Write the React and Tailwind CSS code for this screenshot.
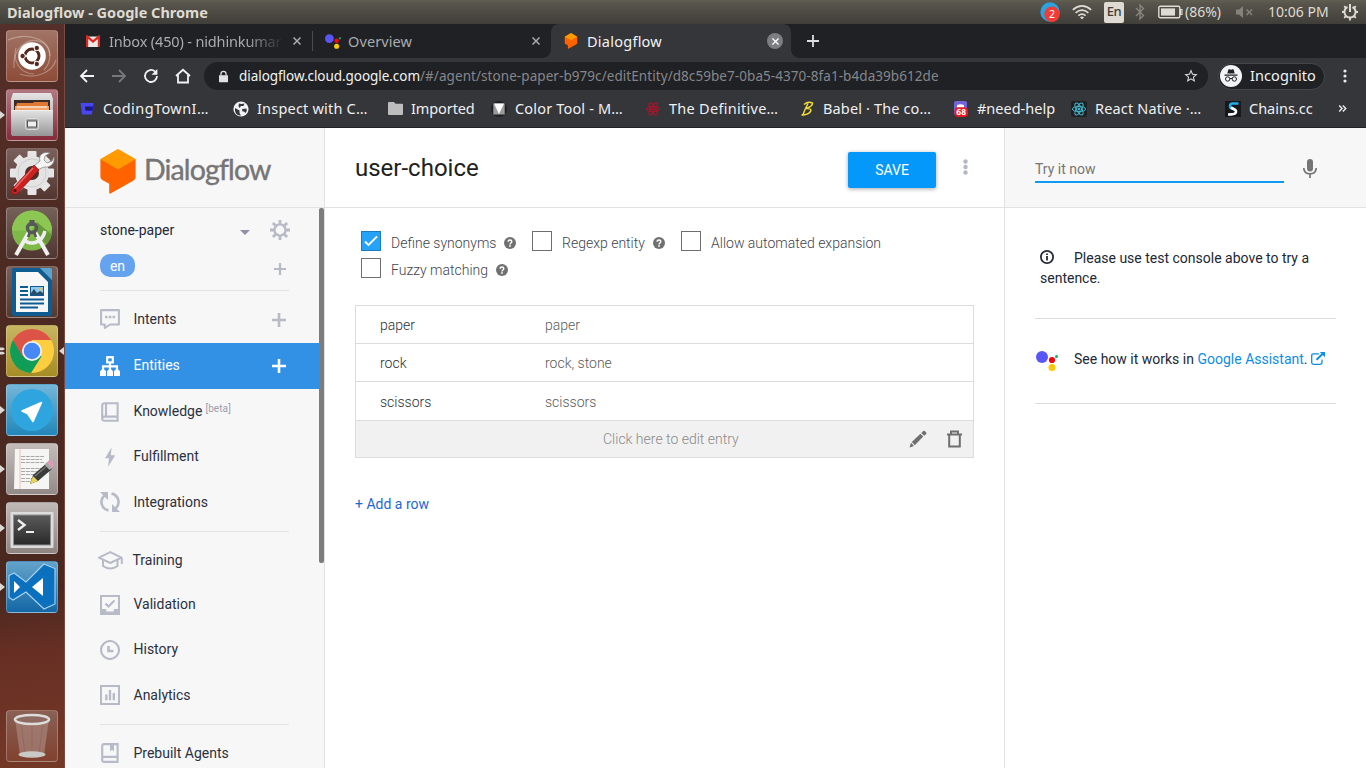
import React from "react";

/* ---------- Desktop launcher ---------- */

function Tile({ className, arrow, focused, children }) {
  return (
    <div className="relative flex w-full shrink-0 justify-center">
      <div className={"h-[52px] w-[52px] overflow-hidden rounded-[4px] border border-white/25 " + className}>
        <svg viewBox="1 1 50 50" className="block h-[50px] w-[50px]">{children}</svg>
      </div>
      {arrow && (
        <svg viewBox="0 0 5 8" className="absolute top-[22px] left-0 h-2 w-[5px]"><path d="M0 0L5 4L0 8Z" fill="#dcd8d4" /></svg>
      )}
      {focused && (
        <>
          <svg viewBox="0 0 5 8" className="absolute top-[22px] left-0 h-2 w-[5px]"><path d="M0 0.5H3L5 2L3 3.2H0ZM0 4.8H3L5 6.2L3 7.5H0Z" fill="#dcd8d4" /></svg>
          <svg viewBox="0 0 5 8" className="absolute top-[22px] right-0 h-2 w-[5px]"><path d="M5 0L0 4L5 8Z" fill="#dcd8d4" /></svg>
        </>
      )}
    </div>
  );
}

function Launcher() {
  return (
    <div className="flex w-[65px] shrink-0 flex-col items-center gap-[7px] border-r border-[#7b4a3f] bg-[linear-gradient(172deg,#55302a_0%,#4d2a22_30%,#4a2820_76%,#672f24_84%,#743826_100%)] pt-[6px]">
      <Tile className="bg-[linear-gradient(#a07466,#8e4c38)]">
        <g fill="none" stroke="#fff" strokeOpacity=".3" strokeWidth="1.2">
          <path d="M8 38C6 18 22 6 36 12C46 18 46 32 38 40" /><path d="M2 10C20 2 44 8 44 26" /><path d="M14 44C30 50 46 42 50 30" /><path d="M10 18C6 30 14 44 28 44" />
        </g>
        <circle cx="26" cy="26" r="13.8" fill="#fff" />
        <circle cx="26" cy="26" r="7" fill="none" stroke="#55291d" strokeWidth="3" />
        <g stroke="#fff" strokeWidth="1.4"><path d="M26 26L15 26M26 26L32 15.5M26 26L32 36.5" /></g>
        <circle cx="26" cy="26" r="5.2" fill="#fff" />
        <g fill="#55291d" stroke="#fff" strokeWidth="1"><circle cx="16.6" cy="26" r="2.7" /><circle cx="30.8" cy="18" r="2.7" /><circle cx="30.8" cy="34" r="2.7" /></g>
      </Tile>
      <Tile className="bg-[linear-gradient(#b17880,#862b3b)]" arrow>
        <defs><linearGradient id="cab" x2="0" y2="1"><stop stopColor="#e4e4e4" /><stop offset="1" stopColor="#969696" /></linearGradient></defs>
        <path d="M7 4H45L47 10V46H5V10Z" fill="url(#cab)" />
        <rect x="8" y="11" width="36" height="10" fill="#3b2d26" />
        <path d="M11 14H27L28 13H42V21H9Z" fill="#e07a33" /><path d="M9 17H43V21H9Z" fill="#f2a46b" /><path d="M11 18H41" stroke="#fff" strokeWidth="1" />
        <path d="M5 21H47V47H6Z" fill="url(#cab)" /><path d="M6 21.5H46" stroke="#eee" />
        <rect x="19.5" y="29.5" width="13" height="11" rx="2" fill="#a8a8a8" stroke="#ddd" /><rect x="21.5" y="32" width="9" height="6" fill="#eee" stroke="#555" />
      </Tile>
      <Tile className="bg-[linear-gradient(#7a605b,#543630)]">
        <g transform="translate(26 25)">
          <g fill="#e6e6e6">{[0, 45, 90, 135].map((a) => <rect key={a} x="-4.5" y="-22" width="9" height="44" rx="1" transform={"rotate(" + a + ")"} />)}</g>
          <circle r="17" fill="#e3e3e3" /><circle r="14" fill="none" stroke="#cfcfcf" /><circle r="7" fill="#4c302b" />
        </g>
        <path d="M44 5L39 8L38 12L41 15L46 13L48 9C49 15 45 20 38 19L31 22L28 18L34 13C32 7 37 3 44 5Z" fill="#f5f5f5" stroke="#8b8b8b" strokeWidth=".8" />
        <path d="M28 17L33 22L12 45C8 49 3 44 7 40Z" fill="#cd2121" stroke="#7d1212" strokeWidth=".7" /><path d="M27 20L9 40" stroke="#ee6a62" strokeWidth="1.5" /><circle cx="9" cy="42.5" r="1.6" fill="#4a1515" />
      </Tile>
      <Tile className="bg-[linear-gradient(#75615a,#503630)]">
        <circle cx="26" cy="23.5" r="20" fill="#7fb947" /><path d="M6 23.5A20 20 0 0 1 46 23.5Z" fill="#8cc653" />
        <path d="M31 15L46 28L41 37L34 34L26 24Z" fill="#67993b" />
        <path d="M18 32C23 39 36 37 39 24" fill="none" stroke="#eee" strokeWidth="3.5" />
        <path d="M23 25L10 48M29 25L42 48" stroke="#f0f0f0" strokeWidth="4" />
        <rect x="23.5" y="13" width="5" height="6" fill="#555" /><circle cx="26" cy="21" r="4.5" fill="none" stroke="#56585a" strokeWidth="3.4" /><path d="M24 25L22 30M28 25L30 30" stroke="#555" strokeWidth="2.5" />
      </Tile>
      <Tile className="bg-[linear-gradient(#77605a,#55382f)]">
        <path d="M8 2H34L46 14V48Q46 50 44 50H8Q6 50 6 48V4Q6 2 8 2Z" fill="#0e5c92" /><path d="M34 2H44Q46 2 46 4V14Z" fill="#5aa3cf" />
        <path d="M10 6H32L42 16V46H10Z" fill="#f7f7f7" />
        <g stroke="#0e5c92" strokeWidth="2"><path d="M14 21H22M14 25H22M14 29H22M14 33.5H38M14 37.5H38M14 41.5H32" /></g>
        <rect x="24.5" y="20.5" width="13" height="9" fill="#91c8ee" stroke="#0e5c92" /><path d="M25 29V27L28 23L31 27L34 25L37 27V29Z" fill="#274d68" /><circle cx="35" cy="23" r="1.3" fill="#f6c445" />
      </Tile>
      <Tile className="bg-[linear-gradient(#c7b561,#a68c24)]" focused>
        <g transform="translate(26 26)">
          <circle r="22" fill="#ffcd40" />
          <path d="M0 0L-19.05 -11A22 22 0 0 0 -1 22L9.5 5.5Z" fill="#109d58" />
          <path d="M0 -11H19.05A22 22 0 0 0 -19.05 -11L-9.5 5.5Z" fill="#dc5347" />
          <circle r="10" fill="#f4f4f4" /><circle r="8.3" fill="#4688f4" />
        </g>
      </Tile>
      <Tile className="bg-[linear-gradient(#74b6d8,#2287b9)]" arrow>
        <circle cx="26" cy="26" r="21" fill="#2fa5e0" /><path d="M35.5 18.5L16 27L21.5 29.5L27 37.5Z" fill="#fff" stroke="#fff" strokeWidth="1.6" strokeLinejoin="round" />
      </Tile>
      <Tile className="bg-[linear-gradient(#c3bcbb,#938b8a)]" arrow>
        <path d="M9 6H43V46H8Z" fill="#f5f5f3" /><path d="M14 6V46" stroke="#edb1ac" strokeWidth=".8" />
        <g stroke="#a9a9a9" strokeWidth="1"><path d="M15 13.5H38M15 16.5H36M15 19.5H38M15 25.5H37M15 28.5H34M15 31.5H32M15 35.5H28M15 38.5H25" strokeDasharray="4 .8" /></g>
        <path d="M24 41L27 32L41 20L46 26L32 38Z" fill="#3b3b3b" /><path d="M24 41L27 33L32 38Z" fill="#e8d455" /><path d="M29 33L42 22" stroke="#777" strokeWidth="1.3" /><path d="M39 21L43 17.5Q47 17 48 22L45 26Z" fill="#dd9bb5" /><path d="M38.5 21.5L41 19.5L46 25L43.5 27Z" fill="#a9a9a9" />
      </Tile>
      <Tile className="bg-[linear-gradient(#c0b8b7,#8e8583)]" arrow>
        <defs><linearGradient id="screen" x2="0" y2="1"><stop stopColor="#5a5a5a" /><stop offset="1" stopColor="#2a2a2a" /></linearGradient></defs>
        <rect x="4.5" y="10" width="43" height="36" rx="1" fill="#dcdcdc" /><rect x="7" y="12.5" width="38" height="31" fill="#8f8f8f" /><rect x="8" y="13.5" width="36" height="29" fill="url(#screen)" />
        <path d="M12 18L18.5 23L12 28" fill="none" stroke="#eee" strokeWidth="2.4" /><path d="M20 30H28" stroke="#eee" strokeWidth="2.2" />
      </Tile>
      <Tile className="bg-[linear-gradient(#63a3cb,#1467a5)]" arrow>
        <path d="M38 3L49 7.5V43L38 48L20 31L7 39L3 36.5V14.5L8 12L20 21Z" fill="#0b70bd" stroke="#a9d4f1" strokeWidth="1.1" />
        <path d="M37 17V35L26 26Z" fill="#fff" /><path d="M8 20L14 26L8 32Z" fill="#fff" />
      </Tile>
      <div className="mt-auto mb-[6px]">
        <Tile className="bg-[linear-gradient(#8a6055,#81412f)]">
          <path d="M9 9H43L38 45Q26 49 14 45Z" fill="#a68278" fillOpacity=".75" />
          <path d="M15 14L19 43M26 14V45M37 14L33 43" stroke="#93695e" strokeWidth="1" />
          <ellipse cx="26" cy="44.5" rx="13.5" ry="3.3" fill="#c9c9c5" />
          <ellipse cx="26" cy="9.5" rx="17" ry="4.5" fill="#8d6b63" stroke="#dcdcd8" strokeWidth="2.6" />
        </Tile>
      </div>
    </div>
  );
}

/* ---------- System menu bar ---------- */

function SystemBar() {
  return (
    <div className="flex h-6 w-full shrink-0 items-center bg-[linear-gradient(#605e51_0%,#55534a_20%,#403e39_100%)] pl-[7px] font-['Noto_Sans',sans-serif] text-[#dfdbd2]">
      <span className="text-[14.5px] leading-6 font-bold whitespace-pre">Dialogflow - Google Chrome</span>
      <div className="ml-auto flex h-full items-center">
        <svg viewBox="0 0 20 20" className="h-5 w-5"><circle cx="10" cy="10" r="9.7" fill="#2ba3df" /><circle cx="12" cy="12.3" r="7.7" fill="#f23b36" /><text x="12" y="16" fontSize="10.5" fill="#fff" textAnchor="middle" fontFamily="Noto Sans">2</text></svg>
        <svg viewBox="0 0 20 16" className="ml-3 h-4 w-5" fill="none" stroke="#dfdbd2" strokeWidth="1.7"><path d="M.8 5.8Q10-2 19.2 5.8M3.6 8.8Q10 3.4 16.4 8.8M6.4 11.6Q10 8.6 13.6 11.6" /><path d="M8 13.2Q10 11.8 12 13.2L10 15.5Z" fill="#dfdbd2" stroke="none" /></svg>
        <span className="ml-3 flex h-[21px] w-5 items-center justify-center rounded-[2px] bg-[#dfdbd2] text-[13px] font-medium tracking-[-0.5px] text-[#3f3d38]">En</span>
        <svg viewBox="0 0 10 18" className="ml-[11px] h-[18px] w-[10px]" fill="none" stroke="#8a877f" strokeWidth="1.3"><path d="M1 5L8.5 12.5L5 16V2L8.5 5.5L1 13" /></svg>
        <svg viewBox="0 0 25 14" className="ml-[13px] h-[14px] w-[25px]"><rect x=".8" y="1.3" width="21" height="11.4" rx="1.5" fill="none" stroke="#dfdbd2" strokeWidth="1.4" /><rect x="3" y="3.4" width="14" height="7.2" fill="#dfdbd2" /><path d="M22.5 4.5H24V9.5H22.5Z" fill="none" stroke="#dfdbd2" strokeWidth="1.1" /></svg>
        <span className="ml-[2px] w-[38px] text-[14px] leading-6 whitespace-nowrap">(86%)</span>
        <svg viewBox="0 0 18 14" className="ml-[13px] h-[14px] w-[18px]"><path d="M0 4.5H3L7 1V13L3 9.5H0Z" fill="#85827a" /><path d="M10.5 4.5L16 10M16 4.5L10.5 10" stroke="#85827a" strokeWidth="1.6" /></svg>
        <span className="ml-[14px] w-[61px] text-[14px] leading-6 whitespace-nowrap">10:06 PM</span>
        <svg viewBox="0 0 18 18" className="mr-[7px] ml-[12px] h-[18px] w-[18px]" fill="none" stroke="#dfdbd2"><path d="M6.5 4A5.6 5.6 0 1 0 11.5 4" strokeWidth="2" /><path d="M9 1V9" strokeWidth="2" /><path d="M9 15V17.5M1 9H3.5M14.5 9H17M3.2 3.2L5 5M14.8 3.2L13 5M3.2 14.8L5 13M14.8 14.8L13 13" strokeWidth="1.8" /></svg>
      </div>
    </div>
  );
}

/* ---------- Browser chrome ---------- */

function AssistantMark({ className }) {
  return (
    <svg viewBox="0 0 22 20" className={className}>
      <circle cx="6" cy="6" r="6" fill="#5a56f6" /><circle cx="16" cy="9" r="3.1" fill="#f3060e" /><circle cx="16" cy="16.5" r="3.5" fill="#fdc807" /><circle cx="20.5" cy="5.6" r="1.5" fill="#13b858" />
    </svg>
  );
}

function DialogflowMark({ className }) {
  return (
    <svg viewBox="0 0 36 45" className={className}>
      <path d="M18 0.4L35.6 10.3V28Q35.6 30.3 33.6 31.4L10.6 44.6Q9.2 45.2 9.2 43.6V34.8L2.3 31Q.4 29.8 .4 27.8V10.3Z" fill="#ff6300" />
      <path d="M16.5 .7Q18 -.2 19.5 .7L35.6 10.3L18 20.4L.4 10.3Z" fill="#ff9a00" />
    </svg>
  );
}

function Cross({ className }) {
  return <svg viewBox="0 0 8 8" className={className} stroke="currentColor" strokeWidth="1.5"><path d="M.5 .5L7.5 7.5M7.5 .5L.5 7.5" /></svg>;
}

function TabStrip() {
  return (
    <div className="flex h-[34px] bg-[#202124] text-[14.5px] leading-[34px] text-[#a9acb1]">
      <div className="flex w-[247px] items-center pl-[21px]">
        <svg viewBox="0 0 14 12" className="h-3 w-[14px]"><path d="M0 1.5V12H14V1.5Z" fill="#e9e9e9" /><path d="M0 12V1Q0 0 1 0L7 5L13 0Q14 0 14 1V12H11.8V4L7 8L2.2 4V12Z" fill="#dd2a20" /></svg>
        <span className="ml-[9px] w-[175px] overflow-hidden tracking-[-0.15px] whitespace-nowrap [mask-image:linear-gradient(90deg,#000_78%,transparent)]">Inbox (450) - nidhinkumar</span>
        <Cross className="ml-[9px] h-2 w-2" />
      </div>
      <div className="flex w-[239px] items-center">
        <div className="h-5 w-px bg-[#4a4c50]" />
        <AssistantMark className="ml-3 h-[15px] w-[16px]" />
        <span className="ml-[7px] tracking-[0.1px]">Overview</span>
        <Cross className="mr-[11px] ml-auto h-2 w-2" />
      </div>
      <div className="relative flex w-[240px] items-center rounded-t-lg bg-[#35363a] text-[#f1f3f4]">
        <span className="absolute bottom-0 -left-2 h-2 w-2 bg-[radial-gradient(circle_at_0_0,transparent_7.5px,#35363a_8px)]" />
        <span className="absolute -right-2 bottom-0 h-2 w-2 bg-[radial-gradient(circle_at_100%_0,transparent_7.5px,#35363a_8px)]" />
        <DialogflowMark className="ml-[13px] h-4 w-[14px]" />
        <span className="ml-[9px] tracking-[0.25px]">Dialogflow</span>
        <span className="mr-2 ml-auto flex h-4 w-4 items-center justify-center rounded-full bg-[#7d7e82] text-white"><Cross className="h-[7px] w-[7px]" /></span>
      </div>
      <svg viewBox="0 0 12 12" className="mt-[11px] ml-4 h-3 w-3" stroke="#dcdee0" strokeWidth="1.8"><path d="M6 0V12M0 6H12" /></svg>
    </div>
  );
}

function Toolbar() {
  return (
    <div className="flex h-9 items-center pl-[14px] text-[14.5px]">
      <svg viewBox="0 0 104 16" className="h-4 w-[112px]" fill="none" stroke="#f1f3f4" strokeWidth="1.8" preserveAspectRatio="xMinYMid meet">
        <path d="M15 8H2M8 2L2 8L8 14" /><path d="M33 8H46M40 2L46 8L40 14" stroke="#77787c" />
        <path d="M78 8A6 6 0 1 1 76 3.5" /><path d="M78.4 1V6.8H72.5Z" fill="#f1f3f4" stroke="none" />
        <path d="M97 8L104 1.8L111 8M99 7V14.5H109V7" />
      </svg>
      <div className="ml-[13px] flex h-7 w-[1004px] items-center rounded-full bg-[#202124] pl-[15px]">
        <svg viewBox="0 0 10 13" className="h-[13px] w-[9px]"><path d="M0 5H10V12Q10 13 9 13H1Q0 13 0 12Z" fill="#dfe1e4" /><path d="M2.2 5.5V3.5A2.8 2.8 0 0 1 7.8 3.5V5.5" fill="none" stroke="#dfe1e4" strokeWidth="1.4" /></svg>
        <span className="ml-[11px] text-[13.5px] tracking-[-0.05px] text-[#f1f3f4]">dialogflow.cloud.google.com</span>
        <span className="text-[13.5px] tracking-[0.065px] text-[#85878b]">/#/agent/stone-paper-b979c/editEntity/d8c59be7-0ba5-4370-8fa1-b4da39b612de</span>
        <svg viewBox="0 0 24 24" className="mr-[9px] ml-auto h-4 w-4" fill="#d6d8db"><path d="M22 9.24l-7.19-.62L12 2 9.19 8.63 2 9.24l5.46 4.73L5.82 21 12 17.27 18.18 21l-1.63-7.03L22 9.24zM12 15.4l-3.76 2.27 1-4.28-3.32-2.88 4.38-.38L12 6.1l1.71 4.04 4.38.38-3.32 2.88 1 4.28L12 15.4z" /></svg>
      </div>
      <div className="ml-[10px] flex h-[27px] w-[107px] items-center rounded-full border border-[#46474b] bg-[#202124] pl-px text-[#f1f3f4]">
        <svg viewBox="0 0 22 22" className="h-[22px] w-[22px]"><circle cx="11" cy="11" r="11" fill="#f1f3f4" /><path d="M7.3 8.5L8.4 4.6Q8.6 4 9.2 4.2L11 4.7L12.8 4.2Q13.4 4 13.6 4.6L14.7 8.5ZM4.5 9.6H17.5V10.7H4.5Z" fill="#202124" /><g fill="none" stroke="#202124"><circle cx="7.7" cy="14" r="2.2" /><circle cx="14.3" cy="14" r="2.2" /><path d="M9.9 13.6Q11 13 12.1 13.6" /></g></svg>
        <span className="ml-2 tracking-[0.08px]">Incognito</span>
      </div>
      <svg viewBox="0 0 4 14" className="ml-[18px] h-[14px] w-1" fill="#e8eaed"><circle cx="2" cy="2" r="1.6" /><circle cx="2" cy="7" r="1.6" /><circle cx="2" cy="12" r="1.6" /></svg>
    </div>
  );
}

function ReactAtom({ color, bg }) {
  return (
    <svg viewBox="0 0 16 16" className="h-4 w-4">
      {bg && <rect width="16" height="16" rx="2" fill={bg} />}
      <g fill="none" stroke={color} strokeWidth="1" transform="translate(8 8)"><ellipse rx="6.6" ry="2.6" /><ellipse rx="6.6" ry="2.6" transform="rotate(60)" /><ellipse rx="6.6" ry="2.6" transform="rotate(120)" /><circle r="1" fill={color} /></g>
    </svg>
  );
}

function Bookmark({ className, label, children }) {
  return (
    <div className={"flex shrink-0 items-center gap-2 " + className}>
      <span className="flex w-4 justify-center">{children}</span>
      <span className="whitespace-nowrap">{label}</span>
    </div>
  );
}

function Bookmarks() {
  return (
    <div className="flex h-[34px] items-center border-b border-[#202124] pb-1 pl-[14px] text-[14.5px] text-[#eff0f1]">
      <Bookmark className="w-[154px] tracking-[0.42px]" label="CodingTownI…"><svg viewBox="0 0 14 13" className="h-[13px] w-[14px]"><path d="M.5 1H13.5L11.8 12.5H2.2Z" fill="#4a47ef" /><path d="M5 4.5H13L12.3 8.8H5.7Z" fill="#1713b5" /><rect x="5.5" y="5" width="3.2" height="3" fill="#26272b" /></svg></Bookmark>
      <Bookmark className="w-[154px] tracking-[0.2px]" label="Inspect with C…"><svg viewBox="0 0 16 16" className="h-4 w-4"><circle cx="8" cy="8" r="7.6" fill="#f1f3f4" /><path d="M2 7L6.5 9.5V12L8 14.5Q3 14.5 2 10ZM6 2.5L8.5 3L11.5 2.5L10.5 5H8L6.5 7L5.5 5ZM9 8L13.5 7.5Q14.5 10 12.5 12L11 10.5H9.5Z" fill="#35363a" /></svg></Bookmark>
      <Bookmark className="w-[104px] tracking-[-0.1px]" label="Imported"><svg viewBox="0 0 15 13" className="h-[13px] w-[15px]"><path d="M1 0H6L7.5 1.8H14Q15 1.8 15 2.8V12Q15 13 14 13H1Q0 13 0 12V1Q0 0 1 0Z" fill="#bdbdbd" /></svg></Bookmark>
      <Bookmark className="w-[154px] tracking-[0.17px]" label="Color Tool - M…"><svg viewBox="0 0 16 16" className="h-4 w-4"><circle cx="8" cy="8" r="8" fill="#202124" /><rect x="2.3" y="2.5" width="11.4" height="11" fill="#9b9b9b" /><path d="M3 2.5H13L8 13Z" fill="#fff" /></svg></Bookmark>
      <Bookmark className="w-[154px] tracking-[0.28px]" label="The Definitive…"><ReactAtom color="#b3122b" /></Bookmark>
      <Bookmark className="w-[154px] tracking-[0.14px]" label="Babel · The co…"><svg viewBox="0 0 14 16" className="h-4 w-[14px]" fill="none" stroke="#f3dc3a" strokeWidth="1.5"><path d="M4 3.5Q8 0 12.5 2Q13 5 6 7.5Q12 7 10.5 10.5Q8 14 1.5 14M8 2.5Q5 8 2.5 15" /></svg></Bookmark>
      <Bookmark className="w-[118px]" label="#need-help"><svg viewBox="0 0 16 16" className="h-4 w-4"><rect x="1" width="13" height="14" rx="2" fill="#7064d8" /><path d="M4 4Q7.5 2.5 11 4V7H4Z" fill="#fff" /><rect x="1.5" y="6.2" width="13.5" height="9.8" rx="4" fill="#e41d25" /><text x="8.2" y="14.2" fontSize="8.5" fontWeight="700" fill="#fff" textAnchor="middle" fontFamily="Noto Sans">68</text></svg></Bookmark>
      <Bookmark className="w-[154px] tracking-[0.16px]" label="React Native ·…"><ReactAtom color="#43b9cf" bg="#202124" /></Bookmark>
      <Bookmark className="w-[109px]" label="Chains.cc"><svg viewBox="0 0 16 16" className="h-4 w-4"><rect width="16" height="16" fill="#17181b" /><path d="M13.5 2.5H7.5Q5 2.5 5 5T7.5 7.5" fill="none" stroke="#1caee8" strokeWidth="2.6" /><path d="M6 6.5L9.5 8.5Q12 10 10.5 12Q9.5 13.5 3 13.5" fill="none" stroke="#fff" strokeWidth="2.6" /></svg></Bookmark>
      <svg viewBox="0 0 9 8" className="ml-1 h-[7px] w-[9px]" fill="none" stroke="#eee" strokeWidth="1.6"><path d="M.7 .7L4 4L.7 7.3M4.9 .7L8.2 4L4.9 7.3" /></svg>
    </div>
  );
}

/* ---------- Dialogflow side navigation ---------- */

const ICONS = {
  intents: (
    <g><path d="M1.1 1.1H18.9V15.5H10L4.8 19V15.5H1.1Z" fill="none" stroke="currentColor" strokeWidth="2.1" strokeLinejoin="round" /><path d="M5 6.8H7.5V9.3H5ZM8.8 6.8H11.3V9.3H8.8ZM12.6 6.8H15.1V9.3H12.6Z" fill="currentColor" /></g>
  ),
  knowledge: <path d="M4.5 1.2H17.6V18.8H4.5Q2.2 18.8 2.2 16.8V3.2Q2.2 1.2 4.5 1.2ZM17.6 14.6H4.8Q2.4 14.6 2.4 16.5M6 1V14.5" fill="none" stroke="currentColor" strokeWidth="2.1" />,
  fulfillment: <path d="M11.6 .5L5 11.2H9L8.2 19.8L15.2 8.2H10.8Z" fill="currentColor" />,
  integrations: (
    <g>
      <path d="M8.5 18.4A8.5 8.5 0 0 1 4.2 3.8M11.5 1.6A8.5 8.5 0 0 1 15.8 16.2" fill="none" stroke="currentColor" strokeWidth="2.6" />
      <path d="M0 0H8V8ZM20 20H12V12Z" fill="currentColor" />
    </g>
  ),
  entities: (
    <g fill="none" stroke="currentColor" strokeWidth="2.2">
      <rect x="7.2" y="1.2" width="5.6" height="5.2" /><path d="M10 6.5V15M3 15V10.3H17V15" />
      <g fill="currentColor" stroke="none"><path d="M0 15.3L1.5 13.7H4.8L6 15.3V20H0ZM7 15.3L8.3 13.7H11.7L13 15.3V20H7ZM14 15.3L15.3 13.7H18.6L20 15.3V20H14Z" /></g>
    </g>
  ),
  validation: (
    <g><path d="M1 1H19V19H1Z" fill="none" stroke="currentColor" strokeWidth="2" /><path d="M1 14H6.2V16.5H13.8V14H19V19H1Z" fill="currentColor" /><path d="M5.5 8.5L8.5 11.5L14.5 5.5" fill="none" stroke="currentColor" strokeWidth="2.2" /></g>
  ),
  history: <g fill="none" stroke="currentColor"><circle cx="10" cy="10" r="9" strokeWidth="2.1" /><path d="M8.5 6V11H13.5" strokeWidth="2.6" /></g>,
  analytics: <g fill="none" stroke="currentColor"><rect x="1" y="1" width="18" height="18" strokeWidth="2" /><path d="M6.3 9.5V15.2M10 5V15.2M13.8 8V15.2" strokeWidth="2.3" /></g>,
  prebuilt: <g><path d="M4.2 1.1H17.6V18.9H4.2Q2.2 18.9 2.2 16.9V3.1Q2.2 1.1 4.2 1.1ZM2.4 13.9H17.6" fill="none" stroke="currentColor" strokeWidth="2.1" /><path d="M10 1H14V8.6L12 6.8L10 8.6Z" fill="currentColor" /></g>,
};

function Plus({ className }) {
  return <svg viewBox="0 0 14 14" className={className} stroke="currentColor" strokeWidth="2.6"><path d="M7 0V14M0 7H14" /></svg>;
}

function NavItem({ icon, label, className, active, plus, beta }) {
  return (
    <div className={"flex shrink-0 items-center pr-[33px] pl-[35px] " + className + (active ? " bg-[#3290e5] text-white" : " text-[#2b303f]")}>
      {icon === "training" ? (
        <svg viewBox="0 0 27 19" className="-mr-[5px] -ml-[3px] h-[19px] w-[27px] shrink-0 text-[#b7bac7]" fill="none" stroke="currentColor" strokeWidth="2">
          <path d="M2 6.6L13.2 1.2L24.5 6.6L13.2 12Z" strokeLinejoin="round" /><path d="M6 9V15Q13.2 20.2 20.5 15V9M24.8 7V13" />
        </svg>
      ) : (
        <svg viewBox="0 0 20 20" className={"h-5 w-5 shrink-0 " + (active ? "text-white" : "text-[#b7bac7]")}>{ICONS[icon]}</svg>
      )}
      <span className={"ml-[13.5px] text-[14px] " + (active ? "-mt-[2px]" : "")}>{label}</span>
      {beta && <span className="-mt-[7px] ml-[3px] text-[10px] tracking-[0.1px] text-[#9a9eae]">[beta]</span>}
      {plus && <Plus className={"ml-auto h-[14px] w-[14px] " + (active ? "text-white" : "mt-[2px] text-[#b7bac7]")} />}
    </div>
  );
}

function Sidebar() {
  return (
    <div className="flex w-[260px] shrink-0 flex-col border-r border-[#e2e2e2] bg-[#f7f7f7]">
      <div className="flex h-20 shrink-0 items-center border-b border-[#e2e2e2] pl-[35px]">
        <DialogflowMark className="mt-2 h-[45px] w-9" />
        <span className="mt-1 ml-[8px] font-[Lato,sans-serif] text-[28.5px] tracking-[-0.85px] text-[#757575] [-webkit-text-stroke:0.4px_#757575]">Dialogflow</span>
      </div>
      <div className="flex min-h-0 flex-1">
        <div className="flex min-w-0 flex-1 flex-col">
          <div className="flex h-[45px] shrink-0 items-center pr-[29px] pl-[35px] text-[14px] text-[#222836]">
            <span>stone-paper</span>
            <svg viewBox="0 0 10 5" className="mt-[3px] ml-auto h-[5px] w-[10px]"><path d="M0 0H10L5 5Z" fill="#8f90a6" /></svg>
            <svg viewBox="0 0 20 20" className="-mt-px ml-5 h-5 w-5" fill="none" stroke="#b7bac7"><circle cx="10" cy="10" r="5.6" strokeWidth="2.4" /><g strokeWidth="2.8"><path d="M10 0V4M10 16V20M0 10H4M16 10H20M2.9 2.9L5.8 5.8M14.2 14.2L17.1 17.1M17.1 2.9L14.2 5.8M5.8 14.2L2.9 17.1" /></g></svg>
          </div>
          <div className="mr-[30px] ml-[35px] flex h-[38px] shrink-0 items-start border-b border-[#e2e2e2]">
            <span className="mt-px flex h-[23px] w-[35px] items-center justify-center rounded-[10px] bg-[#66a3ee] pt-[2px] text-[14px] text-white">en</span>
            <Plus className="mt-[10px] mr-[3px] ml-auto h-3 w-3 text-[#b7bac7]" />
          </div>
          <NavItem icon="intents" label="Intents" className="h-[52px] pt-1" plus />
          <NavItem icon="entities" label="Entities" className="h-[46px]" active plus />
          <NavItem icon="knowledge" label="Knowledge" className="h-[45px]" beta />
          <NavItem icon="fulfillment" label="Fulfillment" className="h-[45px]" />
          <NavItem icon="integrations" label="Integrations" className="h-[46px]" />
          <div className="mt-[6px] mr-[30px] mb-[6px] ml-[35px] h-px shrink-0 bg-[#e2e2e2]" />
          <NavItem icon="training" label="Training" className="h-11" />
          <NavItem icon="validation" label="Validation" className="h-[45px]" />
          <NavItem icon="history" label="History" className="h-[45px]" />
          <NavItem icon="analytics" label="Analytics" className="h-[46px]" />
          <div className="mt-[6px] mr-[30px] mb-[6px] ml-[35px] h-px shrink-0 bg-[#e2e2e2]" />
          <NavItem icon="prebuilt" label="Prebuilt Agents" className="h-11" />
        </div>
        <div className="w-[5px] shrink-0"><div className="h-[355px] w-[5px] rounded-[2px] bg-[#7d7d7d]" /></div>
      </div>
    </div>
  );
}

/* ---------- Entity editor ---------- */

function Help() {
  return (
    <svg viewBox="0 0 12 12" className="h-3 w-3"><circle cx="6" cy="6" r="6" fill="#707070" /><path d="M4.2 4.7Q4.2 3 6 3T7.8 4.6Q7.8 5.4 6.9 6T6 7.4" fill="none" stroke="#fff" strokeWidth="1.5" /><rect x="5.2" y="8.2" width="1.6" height="1.6" fill="#fff" /></svg>
  );
}

function Option({ label, checked, help, className = "" }) {
  return (
    <div className={"flex h-5 " + className}>
      <span className={"flex h-5 w-5 items-center justify-center border " + (checked ? "border-[#1a7bc0] bg-[#26a2f8]" : "border-[#6f6f6f] bg-white")}>
        {checked && <svg viewBox="0 0 14 12" className="h-3 w-[14px]" fill="none" stroke="#fff" strokeWidth="1.8"><path d="M1 6.5L4.5 10L13 1.5" /></svg>}
      </span>
      <span className="mt-[2px] ml-[10px] text-[14px] leading-5 font-light text-[#40444f]">{label}</span>
      {help && <span className="mt-[6px] ml-[8px]"><Help /></span>}
    </div>
  );
}

const ENTRIES = [["paper", "paper", "h-[37px]"], ["rock", "rock, stone", "h-[37px]"], ["scissors", "scissors", "h-[38px]"]];

function Editor() {
  return (
    <div className="flex w-[680px] shrink-0 flex-col border-r border-[#e2e2e2] bg-white">
      <div className="flex h-20 shrink-0 items-center border-b border-[#e2e2e2] pr-[36px] pl-[30px]">
        <h1 className="text-[24px] text-[#212121]">user-choice</h1>
        <button className="mt-[5px] ml-auto h-9 w-[88px] rounded-[2px] bg-[#0398fa] text-[14px] text-white shadow-[0_1px_4px_rgba(0,0,0,.35)]">SAVE</button>
        <svg viewBox="0 0 5 16" className="mb-px ml-[27px] h-4 w-[5px]" fill="#b4b7c4"><circle cx="2.5" cy="2.5" r="2.2" /><circle cx="2.5" cy="8" r="2.2" /><circle cx="2.5" cy="13.5" r="2.2" /></svg>
      </div>
      <div className="flex flex-col gap-[7px] pt-[23px] pl-9">
        <div className="flex">
          <Option label="Define synonyms" checked help className="w-[171px]" />
          <Option label="Regexp entity" help className="w-[149px]" />
          <Option label="Allow automated expansion" />
        </div>
        <Option label="Fuzzy matching" help />
      </div>
      <div className="mt-[27px] ml-[30px] w-[619px] border border-[#dcdcdc] text-[14px] font-light">
        {ENTRIES.map(([name, syn, h]) => (
          <div key={name} className={"box-content flex items-center border-b border-[#dcdcdc] " + h}>
            <span className="mt-[2px] ml-6 w-[165px] text-[#2b2f3a]">{name}</span>
            <span className="mt-[2px] text-[#5c5c5c]">{syn}</span>
          </div>
        ))}
        <div className="flex h-9 items-center bg-[#f1f1f1] pr-[11px] pl-[247px] text-[#8b8b8b]">
          <span>Click here to edit entry</span>
          <svg viewBox="0 0 18 18" className="ml-auto h-[18px] w-[18px]" fill="#6f6f6f"><path d="M.5 17.5L2 12.8L5 16L.5 17.5ZM2.8 12L11.4 3.8L14.3 6.6L5.8 15.2ZM12.3 3L14.3 1Q15 .4 15.8 1L17.2 2.4Q17.8 3.2 17.2 3.9L15.2 5.8Z" /></svg>
          <svg viewBox="0 0 15 18" className="ml-5 h-[18px] w-[15px]" fill="none" stroke="#6f6f6f" strokeWidth="2"><path d="M0 4.5H15M4 4V1.5H11V4M2.2 5V16.5H12.8V5" /></svg>
        </div>
      </div>
      <span className="mt-[36px] ml-[30px] text-[14px] leading-5 text-[#1d66d3]">+ Add a row</span>
    </div>
  );
}

/* ---------- Test console ---------- */

function Console() {
  return (
    <div className="flex flex-1 flex-col bg-white text-[14px] text-[#212736]">
      <div className="flex h-20 shrink-0 border-b border-[#e2e2e2] bg-[#f7f7f7] pl-[30px]">
        <div className="mt-[30px] h-[25px] w-[249px] border-b-2 border-[#0b9bf4] leading-[22px] text-[#757575]">Try it now</div>
        <svg viewBox="0 0 14 20" className="mt-[31px] ml-[19px] h-5 w-[14px]"><rect x="4" y="0" width="6" height="12.5" rx="3" fill="#757575" /><path d="M.8 9Q1 14.8 7 14.8T13.2 9M7 15V19" fill="none" stroke="#757575" strokeWidth="1.7" /></svg>
      </div>
      <div className="mr-[30px] ml-[30px] h-[111px] border-b border-[#dcdcdc] pt-10 pl-[5px] leading-5">
        <div className="flex items-center">
          <svg viewBox="0 0 14 14" className="-mt-[2px] h-[14px] w-[14px]"><circle cx="7" cy="7" r="6.1" fill="none" stroke="#252b39" strokeWidth="1.8" /><path d="M6.1 3.4H7.9V5H6.1ZM6.1 6H7.9V10.6H6.1Z" fill="#252b39" /></svg>
          <span className="ml-5">Please use test console above to try a</span>
        </div>
        <div>sentence.</div>
      </div>
      <div className="mr-[30px] ml-[30px] flex h-[85px] items-center border-b border-[#dcdcdc] pl-[1px]">
        <AssistantMark className="-mt-px h-5 w-[22px]" />
        <span className="-mt-[3px] ml-4">See how it works in</span>
        <span className="-mt-[3px] ml-[3.5px] whitespace-nowrap"><span className="text-[#0b8ee8]">Google Assistant</span>.</span>
        <svg viewBox="0 0 14 13" className="-mt-[5px] ml-[3px] h-[13px] w-[14px]" fill="none" stroke="#0b8ee8" strokeWidth="1.3"><path d="M8 1.8H2.5Q.7 1.8 .7 3.5V10.5Q.7 12.3 2.5 12.3H9.3Q11 12.3 11 10.5V7.5" /><path d="M5.5 7.8L12 1.5" strokeWidth="1.9" /><path d="M8.8 0H14V5.2Z" fill="#0b8ee8" stroke="none" /></svg>
      </div>
    </div>
  );
}

export default function App() {
  return (
    <div className="flex h-[768px] w-[1366px] flex-col overflow-hidden font-[Roboto,sans-serif]">
      <SystemBar />
      <div className="flex min-h-0 flex-1">
        <Launcher />
        <div className="flex min-w-0 flex-1 flex-col">
          <div className="shrink-0 bg-[#35363a] font-['Noto_Sans',sans-serif]">
            <TabStrip />
            <Toolbar />
            <Bookmarks />
          </div>
          <div className="flex min-h-0 flex-1">
            <Sidebar />
            <Editor />
            <Console />
          </div>
        </div>
      </div>
    </div>
  );
}
